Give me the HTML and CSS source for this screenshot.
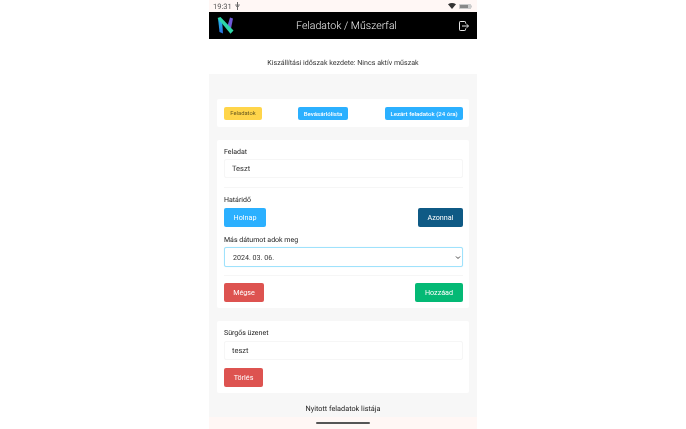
FILE: index.html
```html
<!DOCTYPE html>
<html lang="hu">
<head>
<meta charset="utf-8">
<title>Feladatok / Műszerfal</title>
<link rel="stylesheet" href="styles.css">
</head>
<body>
<div class="phone">
  <div class="status">
    <span class="time">19:31</span>
    <svg class="usb" width="5" height="8" viewBox="0 0 5 8"><path d="M2.5 0v8M1 2.200v1.600l1.500 1.200L4 3.800V2.200" fill="none" stroke="#666" stroke-width="1"/></svg>
    <span class="spacer"></span>
    <svg class="wifi" width="8" height="6" viewBox="0 0 8 6"><path d="M0 1.200Q4-1 8 1.200L4 6z" fill="#333"/></svg>
    <svg class="batt" width="13" height="5" viewBox="0 0 13 5"><rect width="12" height="5" rx=".6" fill="#ccc"/><rect x="1" y="1" width="8" height="3" fill="#888"/><rect x="12" y="1.500" width="1" height="2" fill="#ccc"/></svg>
  </div>
  <header class="topbar">
    <svg class="logo" width="17" height="17" viewBox="0 0 17 17">
      <defs><linearGradient id="lb" x1="0" y1="0" x2="0" y2="1"><stop offset="0" stop-color="#24c8ee"/><stop offset="1" stop-color="#2a6fe0"/></linearGradient></defs>
      <path d="M1 1L5 2.500L6 16.500L2.500 15Z" fill="url(#lb)"/>
      <path d="M13 0.500L16 1.500L14 11.500L10.500 9Z" fill="#6f5ad8"/>
      <path d="M0.500 1L3.500 0L16.500 13.500L13.500 16.800Z" fill="#2fd6a8"/>
    </svg>
    <h1 class="title">Feladatok / Műszerfal</h1>
    <svg class="exit" width="10" height="10" viewBox="0 0 10 10" fill="none" stroke="#e6e6e6" stroke-width="1"><path d="M6.500 2.500V1.200A.7.7 0 0 0 5.800.5H1.200a.7.7 0 0 0-.7.7v7.600a.7.7 0 0 0 .7.7h4.600a.7.7 0 0 0 .7-.7V7.500"/><path d="M3 5h6.500M7.400 3 9.500 5 7.400 7"/></svg>
  </header>
  <div class="shift">Kiszállítási időszak kezdete: Nincs aktív műszak</div>
  <main class="content">
    <section class="card tabs">
      <button class="tab tab-yellow">Feladatok</button>
      <button class="tab tab-blue tab-list">Bevásárlólista</button>
      <button class="tab tab-blue tab-closed">Lezárt feladatok (24 óra)</button>
    </section>
    <section class="card form">
      <label class="label">Feladat</label>
      <div class="field">Teszt</div>
      <hr class="rule rule-a">
      <label class="label">Határidő</label>
      <div class="row row-date">
        <button class="btn btn-blue btn-holnap">Holnap</button>
        <button class="btn btn-navy">Azonnal</button>
      </div>
      <label class="label label-other">Más dátumot adok meg</label>
      <div class="field field-select">
        <span class="date">2024. 03. 06.</span>
        <svg width="6" height="5" viewBox="0 0 6 5"><path d="M1 1.500l2 2 2-2" fill="none" stroke="#444" stroke-width="1"/></svg>
      </div>
      <hr class="rule rule-b">
      <div class="row">
        <button class="btn btn-red btn-megse">Mégse</button>
        <button class="btn btn-green">Hozzáad</button>
      </div>
    </section>
    <section class="card urgent">
      <label class="label">Sürgős üzenet</label>
      <div class="field field-urgent">teszt</div>
      <button class="btn btn-red btn-torles">Törlés</button>
    </section>
    <h2 class="list-title">Nyitott feladatok listája</h2>
  </main>
  <div class="navbar"><span class="handle"></span></div>
</div>
</body>
</html>
```
FILE: styles.css
```css
* { box-sizing: border-box; }
html, body { margin: 0; height: 100%; background: #fff; overflow: hidden; }
body { display: flex; justify-content: center; font-family: Roboto, "Liberation Sans", sans-serif; color: #333; text-rendering: geometricPrecision; }
.phone { position: relative; width: 268px; height: 429px; overflow: hidden; background: #f7f7f7; filter: blur(.3px); }
.status { height: 12px; background: #fff7f5; display: flex; align-items: center; padding: 0 5px 0 4px; font-size: 7.5px; color: #555; }
.usb { margin-left: 3px; }
.spacer { flex: 1; }
.wifi { margin-right: 3px; }
.topbar { height: 27px; background: #000; display: flex; align-items: center; justify-content: space-between; padding: 0 8px; }
.title { margin: 0; font-size: 10.6px; font-weight: 300; color: #f0f0f0; }
.logo, .exit { flex: none; }
.shift { height: 35px; background: #fff; display: flex; align-items: center; justify-content: center; font-size: 7.1px; color: #333; padding-top: 12px; }
.content { padding: 25px 8px 0; }
.card { background: #fff; border-radius: 2px; }
.tabs { height: 28px; display: flex; align-items: center; justify-content: space-between; padding: 0 6px 0 7px; margin-bottom: 13px; }
button { font-family: inherit; border: 0; cursor: pointer; padding: 0; }
.tab { height: 13px; border-radius: 2px; color: #fff; font-size: 6.1px; white-space: nowrap; }
.tab-yellow { background: #ffd54a; color: #6a5a20; width: 38px; font-size: 5.8px; }
.tab-blue { background: #2bb0ff; font-weight: 500; }
.tab-list { width: 50px; margin-right: 1px; }
.tab-closed { width: 78px; }
.form { height: 168px; padding: 7px 6px 0 7px; margin-bottom: 13px; }
.urgent { height: 72px; padding: 7px 6px 0 7px; margin-bottom: 11px; }
.label { display: block; font-size: 7px; line-height: 10px; color: #222; }
.field { height: 19px; margin-top: 2px; border: 1px solid #f6f6f6; border-radius: 2px; padding: 0 7px; font-size: 7.5px; line-height: 17px; color: #333; background: #fff; }
.field-urgent { margin-top: 3px; }
.field-select { height: 20px; display: flex; align-items: center; justify-content: space-between; border-color: #9fe2fc; box-shadow: 0 0 1px #bdeafd; padding: 0 1px 0 8px; font-size: 7.1px; }
.rule { border: 0; border-top: 1px solid #f6f6f6; margin: 0; }
.rule-a { margin: 9px 0 7px; }
.rule-b { margin: 8px 0 7px; }
.row { display: flex; justify-content: space-between; }
.row-date { margin-top: 3px; }
.label-other { margin-top: 8px; }
.btn { height: 19px; border-radius: 2px; font-size: 7.2px; color: #fff; }
.btn-blue { background: #2bb0ff; }
.btn-navy { background: #0f5a85; width: 45px; }
.btn-holnap { width: 42px; }
.btn-red { background: #dd5350; }
.btn-megse { width: 40px; }
.btn-green { background: #04b975; width: 48px; }
.btn-torles { width: 39px; margin-top: 8px; display: block; }
.list-title { margin: 0; text-align: center; font-size: 7.3px; font-weight: 400; line-height: 10px; color: #222; }
.navbar { position: absolute; left: 0; right: 0; bottom: 0; height: 12px; background: #fff7f5; display: flex; justify-content: center; align-items: center; }
.handle { width: 54px; height: 2px; background: #555; border-radius: 1px; }
```
